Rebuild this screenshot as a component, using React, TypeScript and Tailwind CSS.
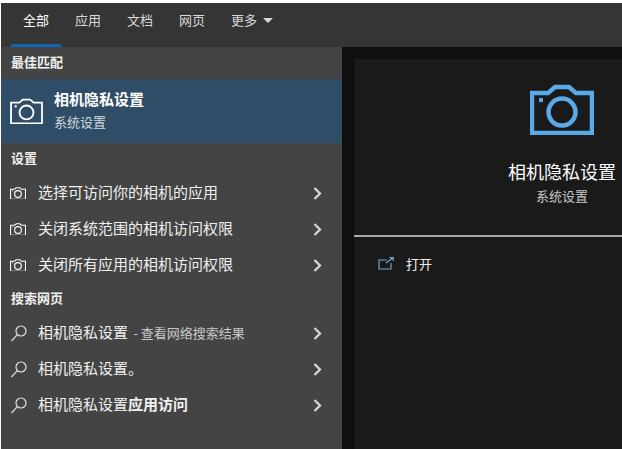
const font = { fontFamily: '"Noto Sans CJK SC", "Liberation Sans", sans-serif' };

function Cam({ size, color, stroke }: { size: number; color: string; stroke: number }) {
  return (
    <svg width={size} height={size * 0.8} viewBox="0 0 64 51" fill="none" stroke={color} strokeWidth={stroke} className="shrink-0">
      <path d="M2 9H18L25 3H39L46 9H62V49H2Z" strokeLinejoin="miter" />
      <circle cx="32" cy="28" r="13.5" />
      <rect x="9" y="14" width="4" height="4" fill={color} stroke="none" />
    </svg>
  );
}

function Chevron() {
  return (
    <svg width="9" height="13" viewBox="0 0 9 13" fill="none" stroke="#d8d8d8" strokeWidth="2.2" className="shrink-0">
      <path d="M1.5 1L7 6.5L1.5 12" />
    </svg>
  );
}

function Search() {
  return (
    <svg width="18" height="18" viewBox="0 0 18 18" fill="none" stroke="#e4e4e4" strokeWidth="1.2" className="shrink-0">
      <circle cx="11" cy="7" r="5" />
      <path d="M7.3 10.7L1.5 17" />
    </svg>
  );
}

function Row({ icon, children }: { icon: React.ReactNode; children: React.ReactNode }) {
  return (
    <div className="flex h-9 items-center pl-[9px] pr-[20px]">
      <div className="flex w-[28px] items-center">{icon}</div>
      <div className="flex-1 pb-[2px] text-[15px] text-[#f0f0f0]">{children}</div>
      <Chevron />
    </div>
  );
}

function Heading({ children }: { children: React.ReactNode }) {
  return <div className="pl-[10px] text-[13px] font-bold leading-5 text-[#f0f0f0]">{children}</div>;
}

const tabs = ["应用", "文档", "网页"];

export default function App() {
  return (
    <div style={font} className="flex h-[449px] w-[622px] flex-col overflow-hidden bg-white pl-px pt-[3px]">
      <div className="flex h-[44px] shrink-0 items-stretch bg-[#353535] text-[13px] text-[#d8d8d8]">
        <div className="relative flex w-[60px] justify-center pt-[7px] text-white">
          <span className="pl-[10px]">全部</span>
          <div className="absolute bottom-0 left-[10px] h-[3px] w-[50px] bg-[#0a68b4]" />
        </div>
        <div className="flex gap-[26px] pl-[14px] pt-[7px]">
          {tabs.map((t) => (
            <span key={t}>{t}</span>
          ))}
          <span className="flex items-start gap-[6px]">
            更多
            <span className="mt-[8px] h-0 w-0 border-x-[5px] border-t-[5px] border-x-transparent border-t-[#d8d8d8]" />
          </span>
        </div>
      </div>
      <div className="flex min-h-0 flex-1">
        <div className="flex w-[341px] shrink-0 flex-col bg-[#444444] pt-[5px]">
          <Heading>最佳匹配</Heading>
          <div className="mt-[7px] flex h-[64px] items-center bg-[#2f4d66] pl-[9px]">
            <Cam size={33} color="#ffffff" stroke={3.5} />
            <div className="ml-[11px] pb-[3px]">
              <div className="text-[15px] font-bold leading-5 text-white">相机隐私设置</div>
              <div className="mt-[4px] text-[13px] leading-[18px] text-[#d0d8de]">系统设置</div>
            </div>
          </div>
          <div className="mt-[5px]">
            <Heading>设置</Heading>
          </div>
          <div className="mt-[7px]">
            <Row icon={<Cam size={16} color="#ffffff" stroke={4.5} />}>选择可访问你的相机的应用</Row>
            <Row icon={<Cam size={16} color="#ffffff" stroke={4.5} />}>关闭系统范围的相机访问权限</Row>
            <Row icon={<Cam size={16} color="#ffffff" stroke={4.5} />}>关闭所有应用的相机访问权限</Row>
          </div>
          <div className="mt-[5px]">
            <Heading>搜索网页</Heading>
          </div>
          <div className="mt-[7px]">
            <Row icon={<Search />}>
              相机隐私设置 <span className="ml-[2px] text-[13px] text-[#c8c8c8]">- 查看网络搜索结果</span>
            </Row>
            <Row icon={<Search />}>相机隐私设置。</Row>
            <Row icon={<Search />}>
              相机隐私设置<span className="font-bold">应用访问</span>
            </Row>
          </div>
        </div>
        <div className="min-w-0 flex-1 bg-[#0f0f0f] pl-[12px] pt-[12px]">
          <div className="h-full bg-[#1a1a1a]">
            <div className="flex h-[178px] flex-col items-center border-b-2 border-[#a8a8a8] pt-[25px] pl-[148px] whitespace-nowrap">
              <Cam size={64} color="#5aaae8" stroke={4.5} />
              <div className="mt-[24px] text-[18px] leading-6 text-white">相机隐私设置</div>
              <div className="mt-[4px] text-[13px] leading-[18px] text-[#c8c8c8]">系统设置</div>
            </div>
            <div className="flex items-center pl-[24px] pt-[17px]">
              <svg width="16" height="13" viewBox="0 0 16 13" fill="none" stroke="#6fa8d4" strokeWidth="1.2" className="shrink-0">
                <path d="M9 3H1V12H13V6" />
                <path d="M8 6L15 0.8M11.5 0.6H15.2V4" />
              </svg>
              <span className="ml-[12px] text-[13px] text-[#f0f0f0]">打开</span>
            </div>
          </div>
        </div>
      </div>
    </div>
  );
}
